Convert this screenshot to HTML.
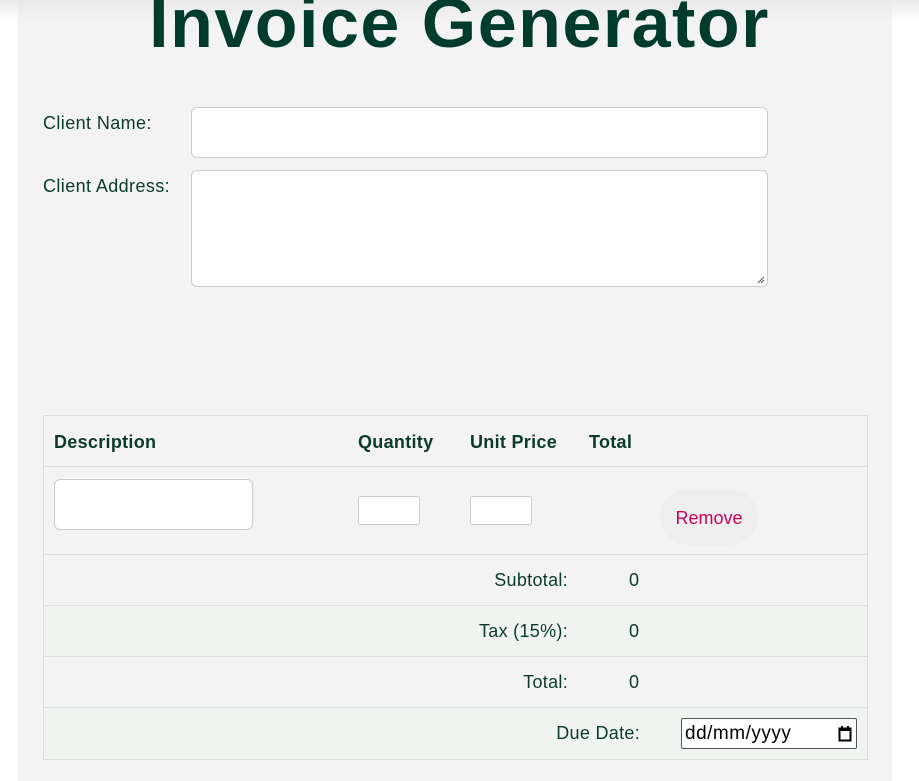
<!DOCTYPE html>
<html><head><style>
body{margin:0;background:#fff;font-family:"Liberation Sans",sans-serif;color:#0b3a2c;width:919px;height:781px;overflow:hidden;position:relative}
.shadow{position:absolute;left:0;top:0;width:919px;height:22px;background:linear-gradient(#e9e9e9,rgba(255,255,255,0));z-index:1}
.panel{position:absolute;left:18px;top:0;width:874px;height:781px;background:#f3f3f3}
h1{position:absolute;left:0;width:919px;top:-17px;margin:0;text-align:center;font-size:70px;font-weight:bold;color:#003b2c;letter-spacing:1.5px;z-index:2}
.lbl{position:absolute;left:43px;font-size:18px;letter-spacing:0.4px;color:#0b3a2c}
.inp{position:absolute;background:#fff;border:1px solid #ccc;border-radius:6px;box-sizing:border-box}
.tbl{position:absolute;left:43px;top:415px;width:825px;border:1px solid #ddd;box-sizing:border-box}
.row{position:relative;border-bottom:1px solid #ddd;box-sizing:border-box}
.row:last-child{border-bottom:none}
.t{position:absolute;font-size:18px;letter-spacing:0.3px}
.b{font-weight:bold}
.g{background:#f0f4f0}
</style></head><body>
<div class="shadow"></div>
<div class="panel"></div>
<h1>Invoice Generator</h1>
<div class="lbl" style="top:113px">Client Name:</div>
<div class="inp" style="left:191px;top:107px;width:577px;height:51px"></div>
<div class="lbl" style="top:176px">Client Address:</div>
<div class="inp" style="left:191px;top:170px;width:577px;height:117px"><svg style="position:absolute;right:2px;bottom:2px" width="9" height="9"><path d="M8 2L2 8M8 5L5 8" stroke="#555" stroke-width="1"/></svg></div>
<div class="tbl">
 <div class="row" style="height:51px"><span class="t b" style="left:10px;top:16px">Description</span><span class="t b" style="left:314px;top:16px">Quantity</span><span class="t b" style="left:426px;top:16px">Unit Price</span><span class="t b" style="left:545px;top:16px">Total</span></div>
 <div class="row" style="height:88px"><div class="inp" style="left:10px;top:12px;width:199px;height:51px"></div><div class="inp" style="left:314px;top:29px;width:62px;height:29px;border-radius:3px"></div><div class="inp" style="left:426px;top:29px;width:62px;height:29px;border-radius:3px"></div><div style="position:absolute;left:616px;top:22px;width:98px;height:56px;border-radius:28px;background:#eeeeee;color:#c8005a;font-size:18px;text-align:center;line-height:58px">Remove</div></div>
 <div class="row" style="height:51px"><span class="t" style="right:299px;top:15px">Subtotal:</span><span class="t" style="left:585px;top:15px">0</span></div>
 <div class="row g" style="height:51px"><span class="t" style="right:299px;top:15px">Tax (15%):</span><span class="t" style="left:585px;top:15px">0</span></div>
 <div class="row" style="height:51px"><span class="t" style="right:299px;top:15px">Total:</span><span class="t" style="left:585px;top:15px">0</span></div>
 <div class="row g" style="height:51px"><span class="t" style="right:227px;top:15px">Due Date:</span><div style="position:absolute;left:637px;top:10px;width:176px;height:31px;border:1px solid #555;background:#fff;box-sizing:border-box;border-radius:2px;font-size:19px;color:#000;padding:4px 0 0 3px;letter-spacing:0.5px">dd/mm/yyyy<svg style="position:absolute;right:4px;top:6px" width="14" height="17"><rect x="1.5" y="3.5" width="11" height="12" fill="none" stroke="#000" stroke-width="2"/><rect x="1" y="3" width="12" height="3" fill="#000"/><path d="M4 1v3M10 1v3" stroke="#000" stroke-width="2"/></svg></div></div>
</div>
</body></html>
